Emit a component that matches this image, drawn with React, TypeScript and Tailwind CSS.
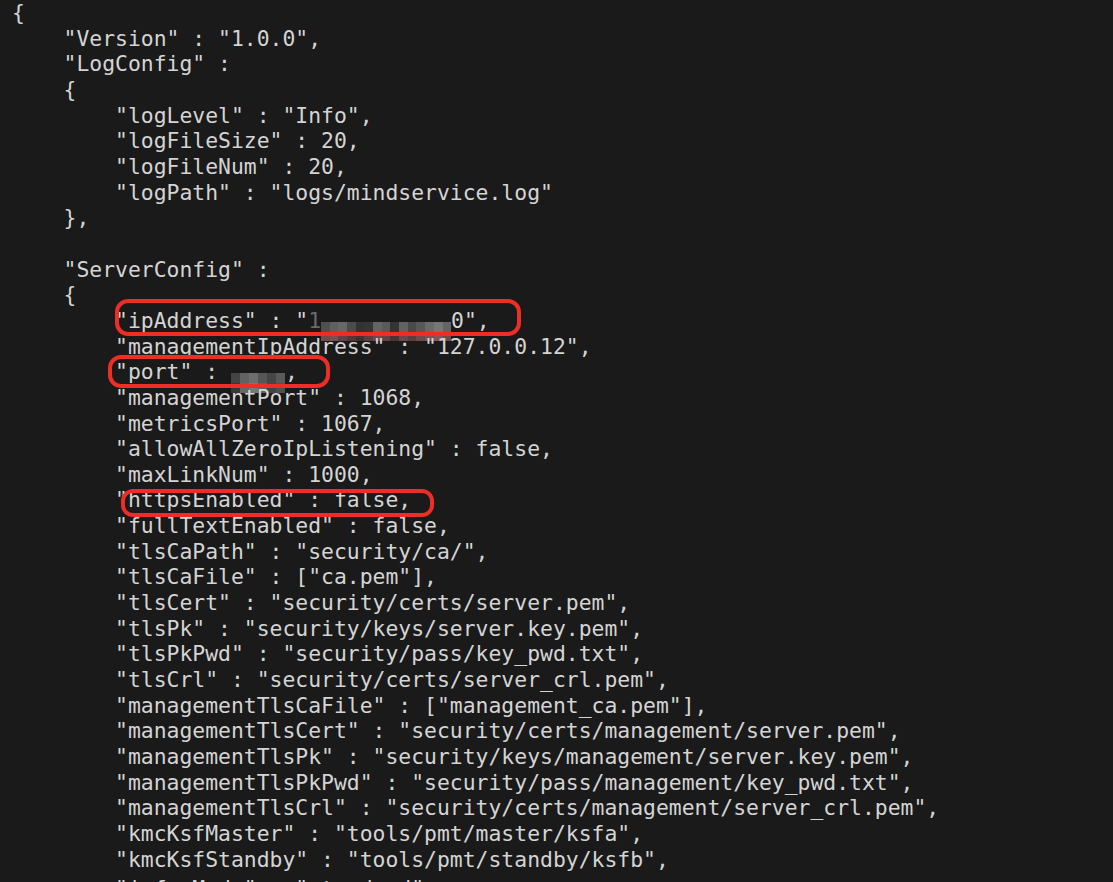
import React from "react";

const ipTop = ["#505050","#606060","#686868","#4c4c4c","#333333","#363636","#646464","#5a5a5a","#343434","#626262","#4a4a4a","#585858","#6a6a6a","#767676","#646464"];
const ipBot = ["#744a4a","#7a5050","#644040","#543838","#443030","#5c3e3e","#724a4a","#664343","#4a3333","#6e4848","#5c3e3e","#704a4a","#7c5252","#825656","#704a4a"];
const portTop = ["#444444","#626262","#6e6e6e","#565656","#464646","#5a5a5a"];
const portBot = ["#383838","#686868","#787878","#606060","#444444","#505050"];

function Mosaic({ top, bot, width, row }: { top: string[]; bot: string[]; width: string; row: string }) {
  return (
    <span className={`inline-flex flex-col align-[-4px] ${width}`}>
      <span className={`flex ${row}`}>
        {top.map((c, i) => (
          <span key={i} className="flex-1" style={{ backgroundColor: c }} />
        ))}
      </span>
      <span className={`flex ${row}`}>
        {bot.map((c, i) => (
          <span key={i} className="flex-1" style={{ backgroundColor: c }} />
        ))}
      </span>
    </span>
  );
}

const before = [
  "{",
  '    "Version" : "1.0.0",',
  '    "LogConfig" :',
  "    {",
  '        "logLevel" : "Info",',
  '        "logFileSize" : 20,',
  '        "logFileNum" : 20,',
  '        "logPath" : "logs/mindservice.log"',
  "    },",
  "",
  '    "ServerConfig" :',
  "    {",
];

const after = [
  '        "managementPort" : 1068,',
  '        "metricsPort" : 1067,',
  '        "allowAllZeroIpListening" : false,',
  '        "maxLinkNum" : 1000,',
  '        "httpsEnabled" : false,',
  '        "fullTextEnabled" : false,',
  '        "tlsCaPath" : "security/ca/",',
  '        "tlsCaFile" : ["ca.pem"],',
  '        "tlsCert" : "security/certs/server.pem",',
  '        "tlsPk" : "security/keys/server.key.pem",',
  '        "tlsPkPwd" : "security/pass/key_pwd.txt",',
  '        "tlsCrl" : "security/certs/server_crl.pem",',
  '        "managementTlsCaFile" : ["management_ca.pem"],',
  '        "managementTlsCert" : "security/certs/management/server.pem",',
  '        "managementTlsPk" : "security/keys/management/server.key.pem",',
  '        "managementTlsPkPwd" : "security/pass/management/key_pwd.txt",',
  '        "managementTlsCrl" : "security/certs/management/server_crl.pem",',
  '        "kmcKsfMaster" : "tools/pmt/master/ksfa",',
  '        "kmcKsfStandby" : "tools/pmt/standby/ksfb",',
];

export default function App() {
  return (
    <div className="relative w-[1113px] h-[882px] overflow-hidden bg-[#1a1a1a]">
      <div
        className="pl-[12px] pt-0 text-[21.4px] leading-[25.67px] text-[#d4d4d4] whitespace-pre"
        style={{ fontFamily: '"DejaVu Sans Mono", "Liberation Mono", monospace' }}
      >
        {before.map((l, i) => (
          <div key={i} className="h-[25.67px]">{l}</div>
        ))}
        <div className="h-[25.67px]">
          {'        "ipAddress" : "'}
          <span className="text-[#6a6a6a]">1</span>
          <Mosaic top={ipTop} bot={ipBot} width="w-[130px]" row="h-[9.5px]" />
          {'0",'}
        </div>
        <div className="h-[25.67px]">{'        "managementIpAddress" : "127.0.0.12",'}</div>
        <div className="h-[25.67px]">
          {'        "port" : '}
          <Mosaic top={portTop} bot={portBot} width="w-[54px]" row="h-[10px]" />
          {","}
        </div>
        {after.map((l, i) => (
          <div key={i} className="h-[25.67px]">{l}</div>
        ))}
        <div className="h-[25.67px] pt-[4px]">{'        "inferMode" : "standard",'}</div>
      </div>

      <div className="absolute left-[115px] top-[299px] w-[406px] h-[37px] rounded-[13px] border-4 border-[#ee2d26]" />
      <div className="absolute left-[108px] top-[355px] w-[222px] h-[33px] rounded-[13px] border-4 border-[#ee2d26]" />
      <div className="absolute left-[121px] top-[489px] w-[313px] h-[28px] rounded-[12px] border-4 border-[#ee2d26]" />
    </div>
  );
}
